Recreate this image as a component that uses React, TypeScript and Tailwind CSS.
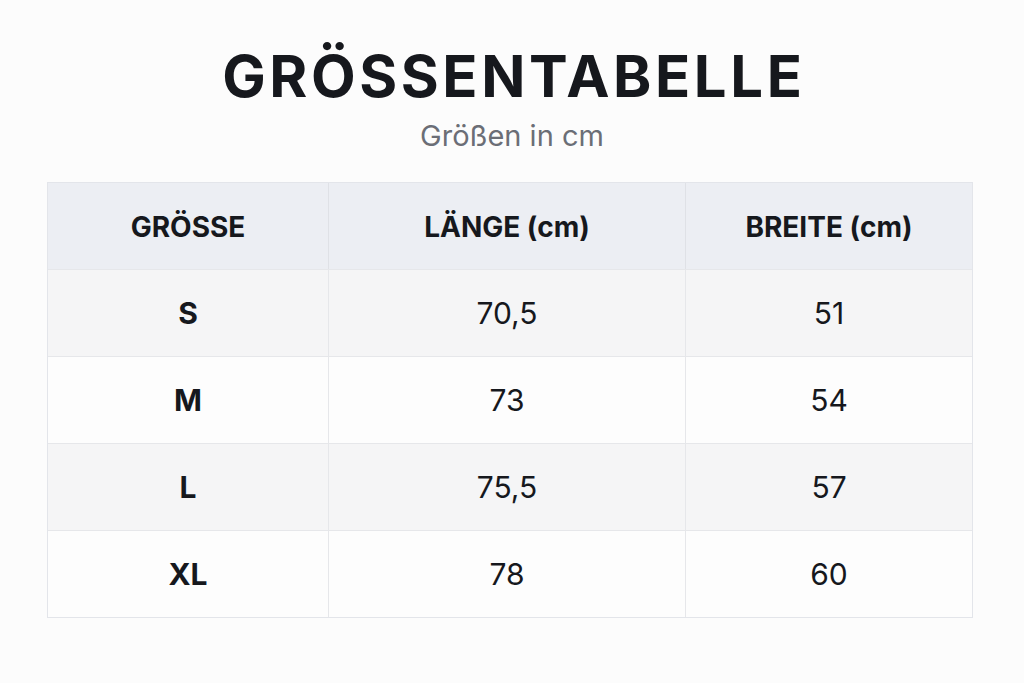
const rows = [
  { size: "S", laenge: "70,5", breite: "51" },
  { size: "M", laenge: "73", breite: "54" },
  { size: "L", laenge: "75,5", breite: "57" },
  { size: "XL", laenge: "78", breite: "60" },
];

export default function App() {
  return (
    <div className="min-h-[683px] w-full bg-[#fcfcfc] font-['Inter',sans-serif] text-[#16181d]">
      <div className="flex flex-col items-center pt-[40px]">
        <h1 className="text-[58px] font-bold leading-[72px] tracking-[0.062em] pl-[0.062em]">GRÖSSENTABELLE</h1>
        <p className="mt-[6px] text-[29px] leading-[36px] text-[#6b6e76]">Größen in cm</p>
      </div>
      <div className="ml-[47px] mr-[51px] mt-[28px] border border-[#e3e5ea]">
        <div className="grid grid-cols-[281px_357px_1fr] bg-[#eceef3] h-[86px] text-[28px] font-bold">
          <div className="flex items-center justify-center border-r border-[#dfe1e6] pt-[2px]">GRÖSSE</div>
          <div className="flex items-center justify-center border-r border-[#dfe1e6] pt-[2px]">LÄNGE (cm)</div>
          <div className="flex items-center justify-center pt-[2px]">BREITE (cm)</div>
        </div>
        {rows.map((r, i) => (
          <div
            key={r.size}
            className={
              "grid grid-cols-[281px_357px_1fr] h-[87px] border-t border-[#e6e7ea] text-[30px] " +
              (i % 2 === 0 ? "bg-[#f5f5f6]" : "bg-[#fdfdfd]")
            }
          >
            <div className="flex items-center justify-center border-r border-[#e6e7ea] font-bold">{r.size}</div>
            <div className="flex items-center justify-center border-r border-[#e6e7ea]">{r.laenge}</div>
            <div className="flex items-center justify-center">{r.breite}</div>
          </div>
        ))}
      </div>
    </div>
  );
}
